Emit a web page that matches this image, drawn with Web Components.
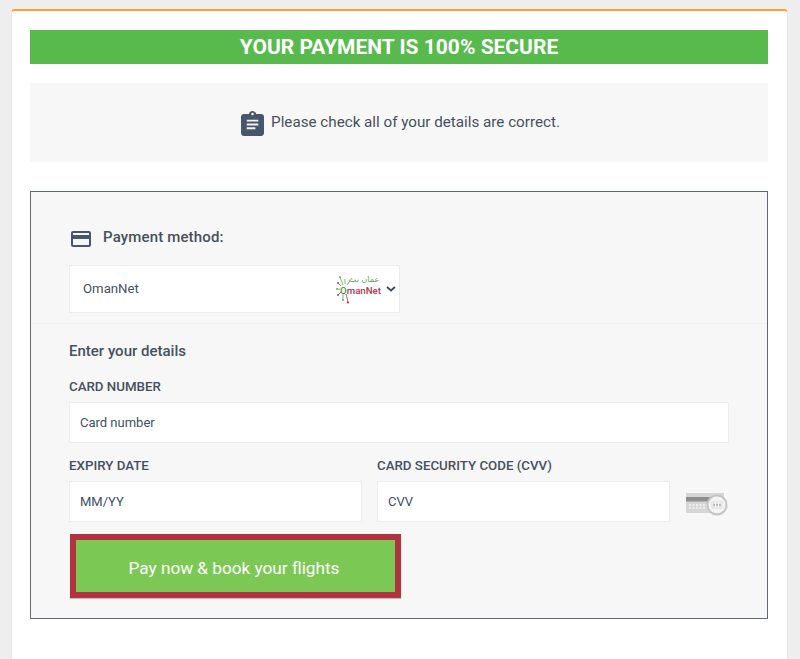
<!DOCTYPE html>
<html lang="en">
<head>
<meta charset="utf-8">
<title>Payment</title>
<style>
html,body{margin:0;padding:0;height:659px;overflow:hidden;background:#eee;font-family:Roboto,"Liberation Sans",sans-serif;color:#47505c}
</style>
</head>
<body>
<template id="t-card"><style>
:host{display:block;box-sizing:border-box;margin:9px 12px 0 11px;height:650px;padding:19px 19px 0 18px;background:#fff;border-top:2px solid #f7a035;border-left:1px solid #e4e4e4;border-right:1px solid #e4e4e4;border-radius:4px 4px 0 0}
</style><slot></slot></template>

<template id="t-banner"><style>
:host{display:flex;align-items:center;justify-content:center;height:34px;background:#58ba4d;color:#fff;font-size:21px;font-weight:700;line-height:34px}
</style><slot></slot></template>

<template id="t-notice"><style>
:host{display:flex;align-items:center;justify-content:center;box-sizing:border-box;gap:7px;height:79px;margin-top:19px;padding-left:3px;background:#f7f7f7;font-size:15.2px;color:#47505c}
svg{display:block;width:23px;height:25px;flex:none;margin-top:1px}
span{position:relative;top:-1px}
</style>
<svg viewBox="0 0 24 26"><path fill="#47566a" d="M3 3h5.200C8.700 1.300 10.200 0 12 0s3.300 1.300 3.800 3H21c1.700 0 3 1.300 3 3v17c0 1.700-1.300 3-3 3H3c-1.700 0-3-1.300-3-3V6c0-1.700 1.300-3 3-3z"/><circle cx="12" cy="3.200" r="1.300" fill="#f7f7f7"/><path fill="#f3f4f5" d="M6 9h12v2H6zM6 13h12v2H6zM6 17h9v2H6z"/></svg>
<span><slot></slot></span></template>

<template id="t-panel"><style>
:host{display:block;box-sizing:border-box;height:428px;margin-top:29px;background:#f7f7f7;border:1px solid #5f6873}
</style><slot></slot></template>

<template id="t-method"><style>
:host{display:block;box-sizing:border-box;height:132px;padding:30px 38px 0 38px;border-bottom:1px solid #f2f2f2}
.h{display:flex;align-items:center;height:30px;gap:12px;font-size:15px;font-weight:500;color:#47505c;letter-spacing:.15px}
svg{display:block;margin:4px 0 0 2px;flex:none}
</style>
<div class="h"><svg width="20" height="16" viewBox="0 0 20 16"><path fill="#47566a" d="M2 0h16c1.100 0 2 .9 2 2v12c0 1.100-.9 2-2 2H2c-1.100 0-2-.9-2-2V2C0 .9.900 0 2 0z"/><path fill="#f7f7f7" d="M2 2h16v2H2zM2 8h16v6H2z"/></svg><span>Payment method:</span></div>
<slot></slot></template>

<template id="t-select"><style>
:host{display:flex;align-items:center;box-sizing:border-box;width:331px;height:48px;margin-top:13px;padding:0 3px 0 13px;background:#fff;border:1px solid #ececec;font-size:13.2px;color:#47505c}
.n{flex:1;position:relative;top:-1px}
svg.c{display:block;margin-left:4px;flex:none}
</style>
<span class="n"><slot></slot></span><slot name="logo"></slot>
<svg class="c" width="10" height="6" viewBox="0 0 10 6"><path d="M1 1l4 3.500L9 1" fill="none" stroke="#3f4a56" stroke-width="1.800"/></svg></template>

<template id="t-logo"><style>
:host{display:block;flex:none;width:46px;height:36px}
svg{display:block}
</style>
<svg width="46" height="36" viewBox="0 0 46 36">
<g stroke="#5bb04d" stroke-width=".8" fill="none"><path d="M7 14L4 6M9 13L9 8M11 14L16 7M4 18L1 18"/><path d="M7 23L7 29"/></g>
<g stroke="#b03a50" stroke-width=".8" fill="none"><path d="M10 23L12 31M5 21L2 24M5 15L2 12"/></g>
<g fill="#b03a50"><circle cx="12" cy="31.500" r="1.100"/><circle cx="2" cy="24" r=".9"/><circle cx="2" cy="12" r=".9"/></g>
<g fill="#5bb04d"><circle cx="4" cy="6" r=".9"/><circle cx="1" cy="18" r=".9"/><circle cx="7" cy="29" r=".9"/></g>
<text x="28" y="11" font-size="8" fill="#5aa94e" text-anchor="middle" style="font-family:'DejaVu Sans',sans-serif">عمان نت</text>
<text x="4" y="22.500" font-size="9.700" font-weight="500" fill="#a83a4f" style="font-family:Roboto,sans-serif"><tspan fill="#3f9a3f">O</tspan>manNet</text>
</svg></template>

<template id="t-details"><style>
:host{display:flex;flex-direction:column;padding:18px 38px 0 38px}
h2{margin:0;font-size:15px;line-height:18px;font-weight:500;color:#47505c}
</style><h2><slot name="title"></slot></h2><slot></slot></template>

<template id="t-field"><style>
:host{display:block;flex:none}
label{display:block;font-size:13.3px;font-weight:500;line-height:14px;color:#47505c}
.i{box-sizing:border-box;height:41px;margin-top:8px;padding:0 10px;display:flex;align-items:center;background:#fff;border:1px solid #ededed;font-size:13px;color:#3d5069}
</style><label><slot name="label"></slot></label><div class="i"><slot></slot></div></template>

<template id="t-row"><style>
:host{display:flex;gap:15px;align-items:flex-start;margin-top:16px}
:host([first]){display:block;margin-top:20px}
</style><slot></slot></template>

<template id="t-cvv"><style>
:host{display:block;flex:none;width:42px;height:26px;margin:31px 0 0 1px}
svg{display:block}
</style>
<svg width="42" height="26" viewBox="0 0 42 26">
<rect x="0" y="3" width="38" height="20" fill="#d6d6d6"/><rect x="0" y="7" width="38" height="4.500" fill="#8f8f8f"/>
<path d="M3 15h20M3 18h18" stroke="#eeeeee" stroke-width="2" stroke-dasharray="2 1.500"/>
<circle cx="31" cy="15" r="9.500" fill="#f4f4f4" stroke="#c4c4c4" stroke-width="2"/>
<rect x="26" y="12" width="10" height="6" fill="#fff" stroke="#bbb" stroke-width=".5"/>
<path d="M28 13.500v3M31 13.500v3M34 13.500v3" stroke="#777" stroke-width="1"/>
</svg></template>

<template id="t-pay"><style>
:host{display:flex;align-items:center;justify-content:center;box-sizing:border-box;width:331px;height:64px;margin:12px 0 0 1px;padding:3px 3px 0 0;background:#7cc855;border:6px solid #b0333f;color:#fff;font-size:17.2px;box-shadow:0 1px 1px rgba(0,0,0,.2)}
</style><slot></slot></template>

<pay-card>
  <pay-banner>YOUR PAYMENT IS 100% SECURE</pay-banner>
  <pay-notice>Please check all of your details are correct.</pay-notice>
  <pay-panel>
    <pay-method>
      <pay-select>OmanNet<pay-logo slot="logo"></pay-logo></pay-select>
    </pay-method>
    <pay-details>
      <span slot="title">Enter your details</span>
      <pay-row first>
        <pay-field><span slot="label">CARD NUMBER</span>Card number</pay-field>
      </pay-row>
      <pay-row>
        <pay-field style="width:293px"><span slot="label">EXPIRY DATE</span>MM/YY</pay-field>
        <pay-field style="width:293px"><span slot="label">CARD SECURITY CODE (CVV)</span>CVV</pay-field>
        <pay-cvv></pay-cvv>
      </pay-row>
      <pay-now>Pay now &amp; book your flights</pay-now>
    </pay-details>
  </pay-panel>
</pay-card>

<script>
const defs={'pay-card':'t-card','pay-banner':'t-banner','pay-notice':'t-notice','pay-panel':'t-panel','pay-method':'t-method','pay-select':'t-select','pay-logo':'t-logo','pay-details':'t-details','pay-field':'t-field','pay-row':'t-row','pay-cvv':'t-cvv','pay-now':'t-pay'};
for(const [name,id] of Object.entries(defs)){
  customElements.define(name,class extends HTMLElement{
    constructor(){super();this.attachShadow({mode:'open'}).appendChild(document.getElementById(id).content.cloneNode(true));}
  });
}
</script>
</body>
</html>
